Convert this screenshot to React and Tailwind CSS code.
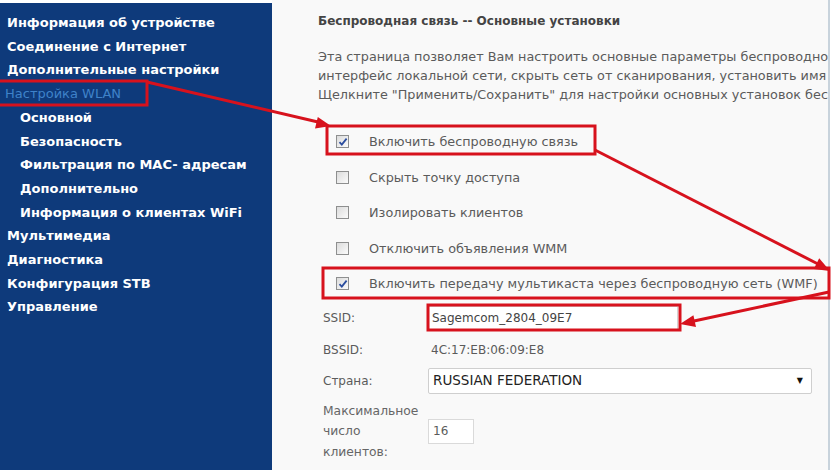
import React from 'react';

const menu = [
  { label: 'Информация об устройстве' },
  { label: 'Соединение с Интернет' },
  { label: 'Дополнительные настройки' },
  { label: 'Настройка WLAN', active: true },
  { label: 'Основной', sub: true },
  { label: 'Безопасность', sub: true },
  { label: 'Фильтрация по MAC- адресам', sub: true },
  { label: 'Дополнительно', sub: true },
  { label: 'Информация о клиентах WiFi', sub: true },
  { label: 'Мультимедиа' },
  { label: 'Диагностика' },
  { label: 'Конфигурация STB' },
  { label: 'Управление' },
];

const options = [
  { label: 'Включить беспроводную связь', checked: true },
  { label: 'Скрыть точку доступа' },
  { label: 'Изолировать клиентов' },
  { label: 'Отключить объявления WMM' },
  { label: 'Включить передачу мультикаста через беспроводную сеть (WMF)', checked: true },
];

const Checkbox = ({ checked }) => (
  <span className="relative flex h-[13px] w-[13px] shrink-0 items-center justify-center border border-[#8e8f8f] bg-gradient-to-br from-[#dcdcdc] to-[#fbfbfb]">
    {checked && (
      <svg width="10" height="10" viewBox="0 0 10 10" className="absolute left-[1px] top-[1px]">
        <path d="M1.5 5.2 L3.8 7.6 L8.6 1.6" fill="none" stroke="#2b4d9e" strokeWidth="1.8" />
      </svg>
    )}
  </span>
);

const Sidebar = () => (
  <aside className="mt-[3px] w-[272px] shrink-0 bg-[#0e3a7b] pt-[8px] font-['DejaVu_Sans',sans-serif] text-[13px] leading-[23.7px]">
    {menu.map((item) => (
      <div
        key={item.label}
        className={
          item.active
            ? 'pl-[5px] font-normal text-[#3f82c9]'
            : item.sub
            ? 'pl-[20px] font-bold text-white'
            : 'pl-[7px] font-bold text-white'
        }
      >
        {item.label}
      </div>
    ))}
  </aside>
);

// red callouts drawn over the page
const Annotations = () => (
  <svg className="pointer-events-none absolute inset-0" width="836" height="470" viewBox="0 0 836 470">
    <g fill="none" stroke="#d7121d" strokeWidth="3">
      <rect x="-2" y="81" width="149" height="24" />
      <rect x="327" y="126" width="268" height="28" />
      <rect x="323" y="268" width="506" height="30" />
      <rect x="428" y="305" width="252" height="25" />
      <line x1="147" y1="82" x2="318" y2="122" />
      <line x1="595" y1="150" x2="818" y2="264" />
      <line x1="829" y1="292" x2="694" y2="321" />
    </g>
    <g fill="#d7121d">
      <polygon points="331,126 315,128.5 317.8,116.9" />
      <polygon points="830,271 813.8,268.9 819.2,258.3" />
      <polygon points="680,324 693.4,315.2 696,327" />
    </g>
  </svg>
);

export default function App() {
  return (
    <div className="relative flex h-[470px] w-[836px] overflow-hidden bg-white">
      <Sidebar />
      <main className="w-[558px] shrink-0 overflow-hidden border-r-2 border-[#c8d3dc] bg-[#f9f9f9] pl-[46px] font-['DejaVu_Sans',sans-serif] text-[12px] text-[#5b5b5b]">
        <h1 className="mt-[12px] whitespace-nowrap text-[12px] font-bold leading-[18px] text-[#444]">
          Беспроводная связь -- Основные установки
        </h1>
        <div className="mt-[17px] overflow-hidden whitespace-nowrap text-[12.8px] leading-[19px]">
          <p>Эта страница позволяет Вам настроить основные параметры беспроводного интерфейса LAN. Вы можете</p>
          <p>интерфейс локальной сети, скрыть сеть от сканирования, установить имя беспроводной сети (SSID)</p>
          <p>Щелкните "Применить/Сохранить" для настройки основных установок беспроводной сети.</p>
        </div>

        <div className="mt-[20px] text-[12.8px]">
          {options.map((o) => (
            <div key={o.label} className="flex h-[35.5px] items-center whitespace-nowrap pl-[18px]">
              <Checkbox checked={o.checked} />
              <span className="ml-[20px]">{o.label}</span>
            </div>
          ))}
        </div>

        <div className="pl-[5px]">
          <div className="flex h-[33px] items-center">
            <span className="w-[105px] shrink-0">SSID:</span>
            <div className="flex h-[24px] w-[250px] items-center border border-[#d4d4d4] bg-white pl-[3px] text-[#444]">
              Sagemcom_2804_09E7
            </div>
          </div>
          <div className="flex h-[30px] items-center">
            <span className="w-[105px] shrink-0">BSSID:</span>
            <span className="pl-[3px]">4C:17:EB:06:09:E8</span>
          </div>
          <div className="flex h-[32px] items-center">
            <span className="w-[105px] shrink-0">Страна:</span>
            <div className="flex h-[26px] w-[384px] items-center justify-between rounded-[2px] border border-[#cfcfcf] bg-white pl-[4px] pr-[8px] text-[13.5px] text-[#222]">
              <span>RUSSIAN FEDERATION</span>
              <span className="text-[8px] text-[#111]">▼</span>
            </div>
          </div>
          <div className="mt-[4px] flex items-center">
            <div className="w-[105px] shrink-0 text-[12.3px] leading-[20.5px] text-[#666]">
              <div>Максимальное</div>
              <div>число</div>
              <div>клиентов:</div>
            </div>
            <div className="flex h-[25px] w-[46px] items-center border border-[#dadada] bg-white pl-[4px]">16</div>
          </div>
        </div>
      </main>
      <Annotations />
    </div>
  );
}
